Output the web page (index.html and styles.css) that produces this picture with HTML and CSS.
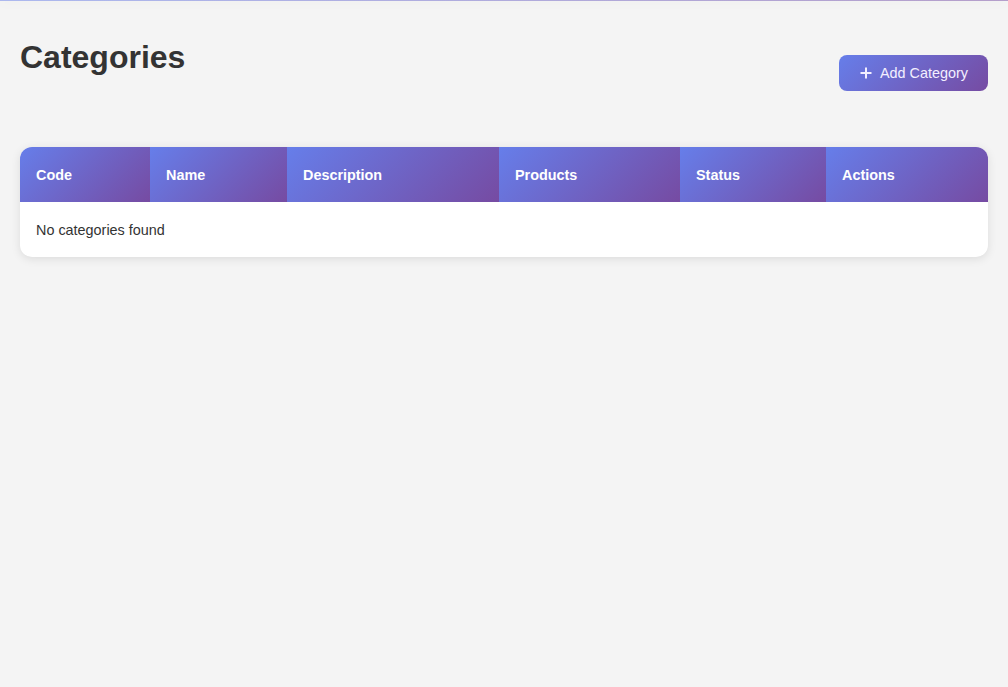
FILE: index.html
```html
<!DOCTYPE html>
<html lang="en">
<head>
<meta charset="utf-8">
<title>Categories</title>
<link rel="stylesheet" href="styles.css">
</head>
<body>
<div class="topbar"></div>
<main class="page">
  <div class="page-header">
    <h1 class="page-title">Categories</h1>
    <button class="btn-primary" type="button">
      <svg class="btn-icon" width="12" height="12" viewBox="0 0 12 12" aria-hidden="true"><path d="M6 0.5v11M0.5 6h11" stroke="currentColor" stroke-width="2" fill="none"/></svg>
      <span>Add Category</span>
    </button>
  </div>
  <div class="table-card">
    <table class="data-table">
      <thead>
        <tr>
          <th class="col-code">Code</th>
          <th class="col-name">Name</th>
          <th class="col-desc">Description</th>
          <th class="col-products">Products</th>
          <th class="col-status">Status</th>
          <th class="col-actions">Actions</th>
        </tr>
      </thead>
      <tbody>
        <tr>
          <td colspan="6" class="empty">No categories found</td>
        </tr>
      </tbody>
    </table>
  </div>
</main>
</body>
</html>
```
FILE: styles.css
```css
* { box-sizing: border-box; }
html, body {
  margin: 0;
  padding: 0;
  background: #f4f4f4;
  font-family: "Liberation Sans", Arial, sans-serif;
  color: #333;
}
.topbar {
  height: 1px;
  background: linear-gradient(90deg, #667eea, #764ba2);
  box-shadow: 0 2px 10px rgba(0, 0, 0, 0.1);
  opacity: 0.5;
}
.page {
  padding: 0 20px 20px;
}
.page-header {
  display: flex;
  justify-content: space-between;
  align-items: flex-start;
  margin-bottom: 56px;
}
.page-title {
  margin: 38px 0 0;
  font-size: 32px;
  line-height: 37px;
  font-weight: 700;
  color: #333;
}
.btn-primary {
  margin-top: 54px;
  display: inline-flex;
  align-items: center;
  gap: 8px;
  height: 36px;
  padding: 0 20px 0 21px;
  border: none;
  border-radius: 8px;
  background: linear-gradient(135deg, #667eea 0%, #764ba2 100%);
  color: #f3efff;
  font-family: "Liberation Sans", Arial, sans-serif;
  font-size: 14.4px;
  cursor: pointer;
}
.btn-icon { display: block; }
.table-card {
  background: #fff;
  border-radius: 12px;
  box-shadow: 0 2px 10px rgba(0, 0, 0, 0.1);
  overflow: hidden;
}
.data-table {
  width: 100%;
  border-collapse: collapse;
  table-layout: fixed;
}
.data-table th {
  background: linear-gradient(135deg, #667eea 0%, #764ba2 100%);
  color: #fff;
  font-size: 14.4px;
  font-weight: 700;
  text-align: left;
  height: 55px;
  padding: 0 16px;
}
.col-code { width: 130px; }
.col-name { width: 137px; }
.col-desc { width: 212px; }
.col-products { width: 181px; }
.col-status { width: 146px; }
.col-actions { width: 162px; }
.data-table td {
  height: 55px;
  padding: 0 16px;
  font-size: 14.4px;
  color: #333;
}
```
